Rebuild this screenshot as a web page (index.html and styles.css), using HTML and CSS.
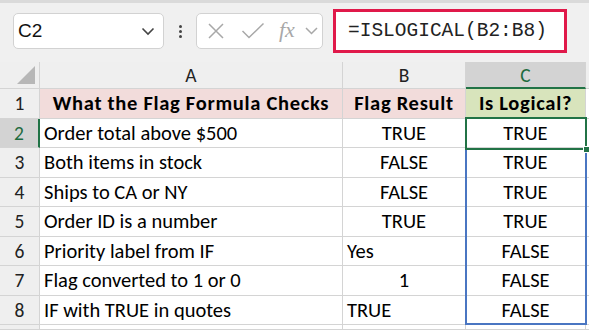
FILE: index.html
```html
<!DOCTYPE html>
<html lang="en">
<head>
	<meta charset="UTF-8">
	<title>ISLOGICAL</title>
	<link rel="stylesheet" href="styles.css">
</head>
<body>
	<div class="toolbar">
		<div class="namebox">
			<span class="ref">C2</span>
			<svg class="chev" width="14" height="9" viewBox="0 0 14 9"><path d="M1.5 1.5 L7 7 L12.5 1.5" fill="none" stroke="#444" stroke-width="1.6"/></svg>
		</div>
		<div class="dots"><i></i><i></i><i></i></div>
		<div class="fxbtns">
			<svg width="18" height="18" viewBox="0 0 18 18"><path d="M2 2 L16 16 M16 2 L2 16" stroke="#a8a8a8" stroke-width="1.5" fill="none"/></svg>
			<svg width="24" height="18" viewBox="0 0 24 18"><path d="M1.5 9 L8 15.5 L22.5 1.5" stroke="#a8a8a8" stroke-width="1.5" fill="none"/></svg>
			<span class="fx">fx</span>
			<svg width="13" height="8" viewBox="0 0 13 8"><path d="M1 1 L6.5 6.5 L12 1" fill="none" stroke="#a8a8a8" stroke-width="1.5"/></svg>
		</div>
		<div class="formula">=ISLOGICAL(B2:B8)</div>
	</div>

	<div class="sheet">
		<div class="corner"><span class="tri"></span></div>
		<div class="colhead">A</div>
		<div class="colhead">B</div>
		<div class="colhead active">C</div>
		<div class="colhead"></div>

		<div class="rowhead">1</div>
		<div class="cell head pink">What the Flag Formula Checks</div>
		<div class="cell head pink">Flag Result</div>
		<div class="cell head green">Is Logical?</div>
		<div class="cell"></div>

		<div class="rowhead active">2</div>
		<div class="cell">Order total above $500</div>
		<div class="cell mid">TRUE</div>
		<div class="cell mid">TRUE</div>
		<div class="cell"></div>

		<div class="rowhead">3</div>
		<div class="cell">Both items in stock</div>
		<div class="cell mid">FALSE</div>
		<div class="cell mid">TRUE</div>
		<div class="cell"></div>

		<div class="rowhead">4</div>
		<div class="cell">Ships to CA or NY</div>
		<div class="cell mid">FALSE</div>
		<div class="cell mid">TRUE</div>
		<div class="cell"></div>

		<div class="rowhead">5</div>
		<div class="cell">Order ID is a number</div>
		<div class="cell mid">TRUE</div>
		<div class="cell mid">TRUE</div>
		<div class="cell"></div>

		<div class="rowhead">6</div>
		<div class="cell">Priority label from IF</div>
		<div class="cell">Yes</div>
		<div class="cell mid">FALSE</div>
		<div class="cell"></div>

		<div class="rowhead">7</div>
		<div class="cell">Flag converted to 1 or 0</div>
		<div class="cell mid">1</div>
		<div class="cell mid">FALSE</div>
		<div class="cell"></div>

		<div class="rowhead">8</div>
		<div class="cell">IF with TRUE in quotes</div>
		<div class="cell">TRUE</div>
		<div class="cell mid">FALSE</div>
		<div class="cell"></div>

		<div class="rowhead"></div>
		<div class="cell"></div>
		<div class="cell"></div>
		<div class="cell"></div>
		<div class="cell"></div>

		<div class="range"></div>
		<div class="selected"><span class="handle"></span></div>
	</div>
</body>
</html>
```

FILE: styles.css
```css
*{padding:0;margin:0;box-sizing:border-box;}
body{
	width:589px;
	height:330px;
	overflow:hidden;
	background:#fff;
	font-family:Carlito, Lato, "Liberation Sans", sans-serif;
	color:#000;
}
.toolbar{
	height:62px;
	background:#f0f0f0;
	border-top:3px solid #dadada;
	display:flex;
	align-items:center;
	padding:0 0 0 13px;
}
.namebox{
	width:151px;
	height:36px;
	margin-top:-3px;
	background:#fff;
	border:1px solid #d2d2d2;
	border-radius:5px;
	display:flex;
	align-items:center;
	justify-content:space-between;
	padding:0 8px 0 4px;
}
.ref{
	font-family:"Liberation Sans", Arial, sans-serif;
	font-size:19px;
	color:#111;
}
.dots{
	width:32px;
	display:flex;
	flex-direction:column;
	align-items:center;
	gap:2px;
	margin-top:-3px;
}
.dots i{
	width:3px;
	height:3px;
	background:#444;
	border-radius:50%;
}
.fxbtns{
	width:127px;
	height:36px;
	margin-top:-3px;
	background:#fff;
	border:1px solid #d2d2d2;
	border-radius:5px;
	display:flex;
	align-items:center;
	gap:14px;
	padding:0 0 0 10px;
}
.fxbtns svg:first-child{margin-right:2px;}
.fx{
	font-family:"Liberation Serif", serif;
	font-style:italic;
	font-size:22px;
	color:#a8a8a8;
	margin:0 -4px 3px 0;
}
.formula{
	margin-left:10px;
	margin-top:-3px;
	width:234px;
	height:44px;
	background:#fff;
	border:3px solid #e0194a;
	font-family:"Liberation Mono", "DejaVu Sans Mono", monospace;
	font-size:19.5px;
	line-height:38px;
	padding-left:12px;
	color:#222;
}
.sheet{
	position:relative;
	display:grid;
	grid-template-columns:40px 303px 123px 120px 1fr;
	grid-template-rows:27px 30px 29px 30px 29px 30px 29px 30px 29px 5px;
	font-size:20.5px;
	overflow:hidden;
}
.corner,.colhead,.rowhead{
	background:#efefef;
	border-right:1px solid #d4d4d4;
	border-bottom:1px solid #d4d4d4;
}
.corner{position:relative;}
.tri{
	position:absolute;
	right:4px;
	bottom:4px;
	width:0;
	height:0;
	border-left:18px solid transparent;
	border-bottom:18px solid #b7b7b7;
}
.colhead{
	text-align:center;
	line-height:27px;
	font-size:19.5px;
	color:#222;
}
.colhead.active{
	background:#d3d3d3;
	color:#1e6b3e;
	border-bottom:2px solid #217346;
}
.rowhead{
	text-align:center;
	line-height:29px;
	font-size:19.5px;
	color:#222;
}
.rowhead.active{
	background:#d3d3d3;
	color:#1e6b3e;
	border-right:2px solid #217346;
}
.cell{
	border-right:1px solid #d4d4d4;
	border-bottom:1px solid #d4d4d4;
	line-height:29px;
	padding:0 4px;
	white-space:nowrap;
	overflow:hidden;
}
.mid{text-align:center;}
.head{
	font-weight:bold;
	text-align:center;
	letter-spacing:0.7px;
}
.pink{background:#f2dcdb;}
.green{background:#d8e4bc;}
.range{
	position:absolute;
	left:465px;
	top:86px;
	width:122px;
	height:177px;
	border:2px solid #4a76c2;
	border-top:0;
}
.selected{
	position:absolute;
	left:465px;
	top:55px;
	width:122px;
	height:33px;
	border:2px solid #217346;
}
.handle{
	position:absolute;
	right:-5px;
	bottom:-5px;
	width:7px;
	height:7px;
	background:#217346;
	border:1px solid #fff;
}
```
